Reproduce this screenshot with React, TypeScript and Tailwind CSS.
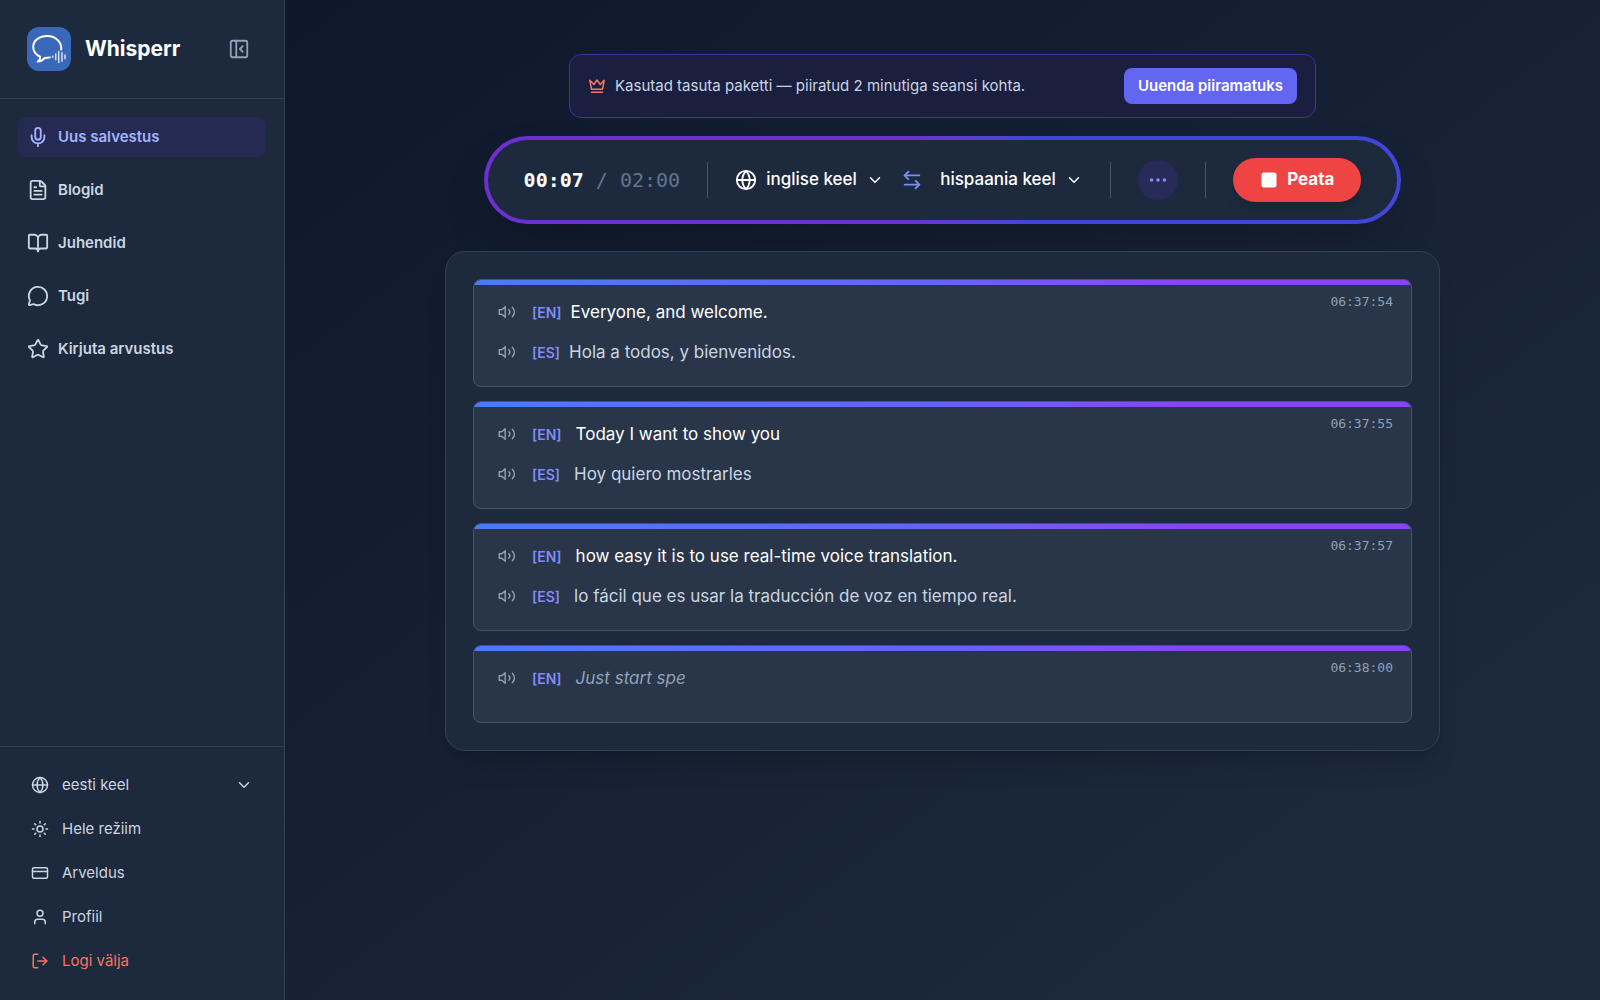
import {
  ArrowLeftRight,
  BookOpen,
  ChevronDown,
  CreditCard,
  Ellipsis,
  FileText,
  Globe,
  LogOut,
  MessageCircle,
  Mic,
  PanelLeftClose,
  Square,
  Star,
  Sun,
  User,
} from "lucide-react";

const navItems = [
  { label: "Uus salvestus", icon: Mic, active: true },
  { label: "Blogid", icon: FileText, active: false },
  { label: "Juhendid", icon: BookOpen, active: false },
  { label: "Tugi", icon: MessageCircle, active: false },
  { label: "Kirjuta arvustus", icon: Star, active: false },
];

const entries = [
  {
    time: "06:37:54",
    en: "Everyone, and welcome.",
    es: "Hola a todos, y bienvenidos.",
    continued: false,
  },
  {
    time: "06:37:55",
    en: "Today I want to show you",
    es: "Hoy quiero mostrarles",
    continued: true,
  },
  {
    time: "06:37:57",
    en: "how easy it is to use real-time voice translation.",
    es: "lo fácil que es usar la traducción de voz en tiempo real.",
    continued: true,
  },
  { time: "06:38:00", en: "Just start spe", es: null, continued: true },
];

const footerItem = "flex h-11 items-center gap-[13px] px-[13px] text-left";

function Logo() {
  return (
    <svg viewBox="0 0 44 44" className="size-11" aria-hidden="true">
      <rect width="44" height="44" rx="12" fill="#3a68b9" />
      <g fill="none" stroke="#fff" strokeLinecap="round" strokeLinejoin="round">
        <path
          strokeWidth="2"
          d="M34.200 22.500C35 15.500 28.800 9 20.300 9 12 9 6.200 13.800 6.200 19.800c0 4.300 2.500 7.800 6.800 9.900.4 1.900-.6 3.600-2.300 4.900 3.100-.1 5.300-1.500 7.100-3.700 2 0 3.600-.1 5-.5"
        />
        <path
          strokeWidth="1.6"
          stroke="#cfdcf1"
          d="M25.700 29.300v1M28.700 27v5.600M31.700 24.500v11M35 25.700v8.600M38 28v3.600"
        />
      </g>
    </svg>
  );
}

function CrownIcon() {
  return (
    <svg
      viewBox="0 0 18 18"
      className="size-[18px] shrink-0 text-[#f87560]"
      fill="none"
      stroke="currentColor"
      strokeWidth="1.5"
      strokeLinecap="round"
      strokeLinejoin="round"
      aria-hidden="true"
    >
      <path d="M3.500 12.200 1.800 3.300l4 4.200L9 3l3.200 4.500 4-4.200-1.700 8.900zM3.500 15.200h11" />
    </svg>
  );
}

function SpeakerIcon() {
  return (
    <svg
      viewBox="0 0 18 18"
      className="size-[18px]"
      fill="none"
      stroke="currentColor"
      strokeWidth="1.4"
      strokeLinecap="round"
      strokeLinejoin="round"
      aria-hidden="true"
    >
      <path d="M1.200 6.700v4.600h2.600l3.400 3V3.700l-3.400 3zM10.800 6.800c1.300 1.300 1.300 3.100 0 4.400M14.300 4.200c2.800 2.800 2.800 6.800 0 9.600" />
    </svg>
  );
}

function Sidebar() {
  return (
    <aside className="flex w-[285px] shrink-0 flex-col border-r border-slate-700 bg-slate-800 text-slate-300">
      <div className="flex h-[99px] items-center border-b border-slate-700 pr-[34px] pl-[27px]">
        <Logo />
        <span className="ml-[14px] text-[21px] font-bold text-white">
          Whisperr
        </span>
        <button
          type="button"
          aria-label="Ahenda"
          className="ml-auto text-slate-400"
        >
          <PanelLeftClose size={22} />
        </button>
      </div>

      <nav className="flex flex-1 flex-col gap-[13px] p-[18px] text-[15px] font-semibold">
        {navItems.map(({ label, icon: Icon, active }) => (
          <a
            key={label}
            href="#"
            className={
              active
                ? "flex h-10 items-center gap-[9px] rounded-lg bg-[#242a52] px-[9px] text-indigo-300"
                : "flex h-10 items-center gap-[9px] rounded-lg px-[9px]"
            }
          >
            <Icon size={22} />
            {label}
          </a>
        ))}
      </nav>

      <div className="flex flex-col border-t border-slate-700 px-[18px] pt-4 pb-[17px] text-[15px]">
        <label className={footerItem}>
          <Globe size={18} />
          <select
            aria-label="Keel"
            className="min-w-0 flex-1 appearance-none bg-transparent outline-none"
          >
            <option>eesti keel</option>
          </select>
          <ChevronDown size={18} />
        </label>
        <button type="button" className={footerItem}>
          <Sun size={18} />
          Hele režiim
        </button>
        <a href="#" className={footerItem}>
          <CreditCard size={18} />
          Arveldus
        </a>
        <a href="#" className={footerItem}>
          <User size={18} />
          Profiil
        </a>
        <button type="button" className={`${footerItem} text-[#f87560]`}>
          <LogOut size={18} />
          Logi välja
        </button>
      </div>
    </aside>
  );
}

function Divider() {
  return <div className="h-9 w-px bg-slate-600" />;
}

function UpgradeBanner() {
  return (
    <div className="flex h-16 w-full max-w-[747px] items-center rounded-xl border border-[#3a35a0] bg-[#1a1f40] px-[18px] text-[15px]">
      <CrownIcon />
      <p className="ml-[9px] text-slate-300">
        Kasutad tasuta paketti — piiratud 2 minutiga seansi kohta.
      </p>
      <button
        type="button"
        className="ml-auto h-9 rounded-lg bg-[#6366f1] px-[14px] font-semibold text-white"
      >
        Uuenda piiramatuks
      </button>
    </div>
  );
}

function Controls() {
  return (
    <div className="mt-[18px] rounded-full bg-linear-to-r from-[#6d2fd0] from-45% to-[#3f46d8] to-60% p-1 shadow-2xl">
      <div className="flex h-20 items-center rounded-full bg-slate-800 px-9 text-[17px] font-medium text-white">
        <div className="font-['DejaVu_Sans_Mono',monospace] text-xl whitespace-pre">
          <span className="font-bold">00:07</span>
          <span className="font-normal text-slate-500"> / 02:00</span>
        </div>
        <div className="ml-[27px] flex items-center">
          <Divider />
          <label className="ml-[27px] flex items-center gap-[9px]">
            <Globe size={22} />
            <select
              aria-label="Lähtekeel"
              className="appearance-none bg-transparent outline-none"
            >
              <option>inglise keel</option>
            </select>
            <ChevronDown size={18} />
          </label>
          <button
            type="button"
            aria-label="Vaheta keeled"
            className="mx-[17px] text-[#7c8ff8]"
          >
            <ArrowLeftRight size={22} />
          </button>
          <label className="flex items-center gap-[9px]">
            <select
              aria-label="Sihtkeel"
              className="appearance-none bg-transparent outline-none"
            >
              <option>hispaania keel</option>
            </select>
            <ChevronDown size={18} />
          </label>
        </div>
        <div className="ml-[27px] flex items-center gap-[27px]">
          <Divider />
          <button
            type="button"
            aria-label="Rohkem"
            className="flex size-10 items-center justify-center rounded-full bg-[#262b58] text-[#7c8ff8]"
          >
            <Ellipsis size={22} className="fill-current" />
          </button>
          <Divider />
          <button
            type="button"
            className="flex h-11 items-center gap-[9px] rounded-full bg-[#ef4444] px-[27px] font-bold shadow-lg"
          >
            <Square size={18} className="fill-white" />
            Peata
          </button>
        </div>
      </div>
    </div>
  );
}

function Line({ lang, children }: { lang: string; children: React.ReactNode }) {
  return (
    <div className="flex h-10 items-baseline leading-10">
      <button
        type="button"
        aria-label="Kuula"
        className="self-center text-slate-400"
      >
        <SpeakerIcon />
      </button>
      <span className="ml-4 text-sm leading-10 font-semibold text-[#818cf8]">
        [{lang}]
      </span>
      {children}
    </div>
  );
}

function Entry({ time, en, es, continued }: (typeof entries)[number]) {
  const indent = continued ? "ml-[14px]" : "ml-[9px]";
  return (
    <article className="min-h-[78px] overflow-hidden rounded-lg border border-slate-600 bg-[#293548]">
      <div className="h-[5px] bg-linear-to-r from-[#467cf5] via-[#6563f1] to-[#8a44ef] to-75%" />
      <div className="flex items-start justify-between pr-[18px] pb-[14px] pl-6">
        <div className="pt-[7px] text-[17px]">
          <Line lang="EN">
            <span
              className={`${indent} ${es ? "text-white" : "text-slate-400 italic"}`}
            >
              {en}
            </span>
          </Line>
          {es && (
            <Line lang="ES">
              <span className={`${indent} text-slate-300`}>{es}</span>
            </Line>
          )}
        </div>
        <time className="mt-[7px] font-['DejaVu_Sans_Mono',monospace] text-[13px] text-slate-400">
          {time}
        </time>
      </div>
    </article>
  );
}

export default function App() {
  return (
    <div className="flex min-h-screen bg-slate-900 font-['Inter',sans-serif] text-base">
      <Sidebar />
      <main className="flex flex-1 flex-col items-center bg-linear-to-br from-slate-900 to-slate-800 to-85% px-9 pt-[54px] pb-9">
        <UpgradeBanner />
        <Controls />
        <section className="mt-[27px] flex w-full max-w-[995px] flex-col gap-[14px] rounded-[20px] border border-slate-700 bg-slate-800 p-[27px] shadow-xl">
          {entries.map((entry) => (
            <Entry key={entry.time} {...entry} />
          ))}
        </section>
      </main>
    </div>
  );
}
